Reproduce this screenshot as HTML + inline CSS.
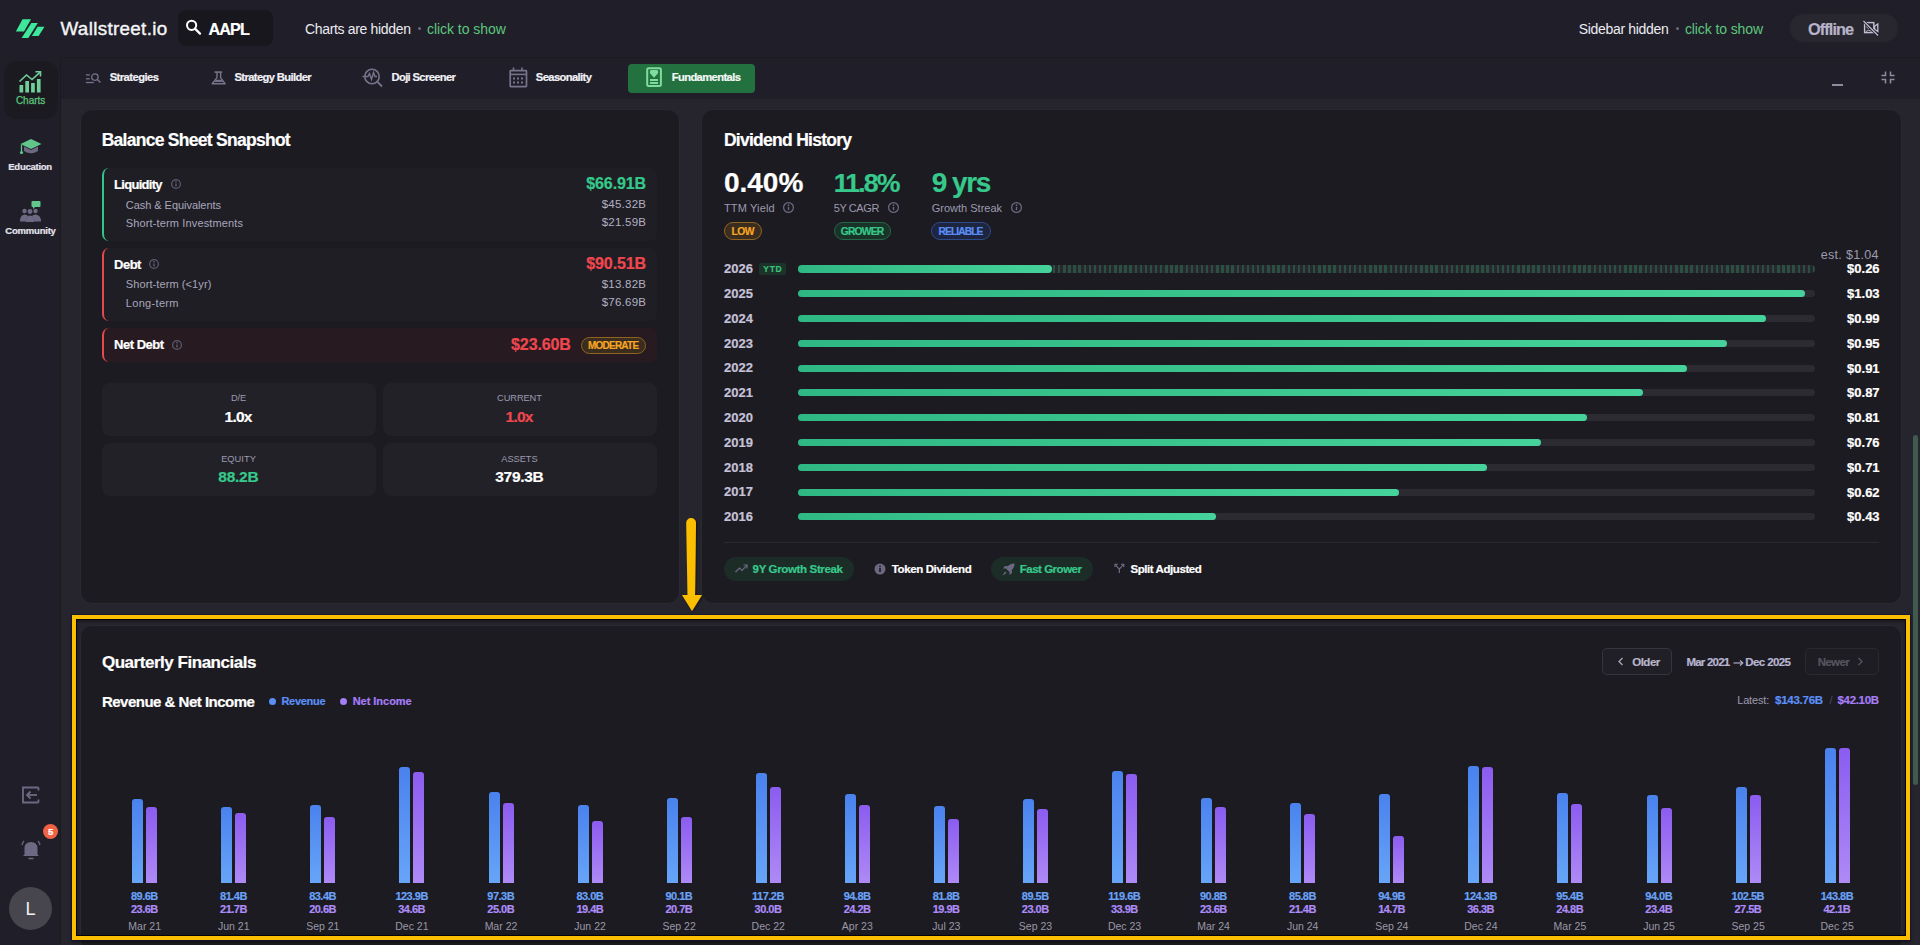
<!DOCTYPE html>
<html><head><meta charset="utf-8"><title>Wallstreet.io</title>
<style>
html,body{margin:0;padding:0;}
body{width:1920px;height:945px;overflow:hidden;position:relative;background:#26252e;font-family:"Liberation Sans",sans-serif;}
.a{position:absolute;box-sizing:border-box;}
.t{position:absolute;white-space:nowrap;}
.t[style*="font-weight:700"]{-webkit-text-stroke:0.2px currentColor;}
svg{position:absolute;overflow:visible;}

</style></head><body>
<div class="a" style="left:0px;top:0px;width:1920px;height:57px;background:#201f29;"></div><div class="a" style="left:0px;top:0px;width:60px;height:945px;background:#201f29;"></div><div class="a" style="left:60px;top:57px;width:1860px;height:1px;background:#1b1a21;"></div><div class="a" style="left:60px;top:57px;width:1px;height:888px;background:#1b1a21;"></div><div class="a" style="left:61px;top:58px;width:1859px;height:41px;background:#201f29;"></div><svg style="left:0;top:0" width="60" height="57" viewBox="0 0 60 57"><polygon points="22.5,19.2 31,19.2 24,31.4 15.9,31.4" fill="#3ee89a"/><polygon points="31.4,23 37.8,23 28.3,38 21.6,38" fill="#3ee89a"/><polygon points="37.6,26.7 44.5,26.7 38.6,36 31.9,36" fill="#3ee89a"/></svg><div class="t" style="left:60.50px;top:19.69px;font-size:18.8px;line-height:18.8px;color:#f4f4f6;letter-spacing:0.338px;-webkit-text-stroke:0.4px #f4f4f6;">Wallstreet.io</div><div class="a" style="left:178px;top:10px;width:95px;height:36px;background:#18171d;border-radius:8px;"></div><svg style="left:185px;top:19px" width="18" height="16" viewBox="0 0 18 16"><circle cx="6.6" cy="6.3" r="4.6" fill="none" stroke="#fff" stroke-width="2"/><line x1="10" y1="9.6" x2="15" y2="14.6" stroke="#fff" stroke-width="2.2" stroke-linecap="round"/></svg><div class="t" style="left:208.50px;top:20.90px;font-size:16.3px;line-height:16.3px;color:#ffffff;font-weight:700;letter-spacing:-1.000px;">AAPL</div><div class="t" style="left:305.00px;top:21.55px;font-size:14px;line-height:14px;color:#ecebf2;letter-spacing:-0.331px;">Charts are hidden</div><div class="a" style="left:417.5px;top:26.5px;width:3.0px;height:3.0px;background:#6b6979;border-radius:50%;"></div><div class="t" style="left:427.00px;top:21.55px;font-size:14px;line-height:14px;color:#5cc77e;letter-spacing:-0.051px;">click to show</div><div class="t" style="left:1578.80px;top:21.65px;font-size:14px;line-height:14px;color:#ecebf2;letter-spacing:-0.322px;">Sidebar hidden</div><div class="a" style="left:1675.5px;top:27px;width:3.0px;height:3px;background:#6b6979;border-radius:50%;"></div><div class="t" style="left:1684.90px;top:21.65px;font-size:14px;line-height:14px;color:#5cc77e;letter-spacing:-0.101px;">click to show</div><div class="a" style="left:1790px;top:14px;width:108px;height:28px;background:#282730;border-radius:14px;"></div><div class="t" style="left:1808.00px;top:20.80px;font-size:16.3px;line-height:16.3px;color:#b7b3c8;font-weight:700;letter-spacing:-0.900px;">Offline</div><svg style="left:1862px;top:20px" width="18" height="17" viewBox="0 0 18 17"><rect x="2.6" y="2.6" width="9.2" height="10" fill="none" stroke="#c2bed4" stroke-width="1.4"/><polygon points="12.6,6.3 15.8,4 15.8,11.5 12.6,9.2" fill="none" stroke="#c2bed4" stroke-width="1.3"/><circle cx="6.2" cy="6.8" r="1.3" fill="none" stroke="#c2bed4" stroke-width="1"/><path d="M4,11.5 Q6.5,8.8 9.5,11.5" fill="none" stroke="#c2bed4" stroke-width="1"/><line x1="1.5" y1="1" x2="16" y2="15.5" stroke="#1f1e27" stroke-width="2.6"/><line x1="1.5" y1="1" x2="16" y2="15.5" stroke="#c2bed4" stroke-width="1.3"/></svg><div class="a" style="left:4px;top:61px;width:54px;height:58px;background:#1b1a20;border-radius:13px;"></div><svg style="left:19px;top:71px" width="24" height="22" viewBox="0 0 24 22"><rect x="0.5" y="14" width="3.7" height="7.5" fill="#6fcf97"/><rect x="6.3" y="10" width="3.7" height="11.5" fill="#6fcf97"/><rect x="12.1" y="12" width="3.7" height="9.5" fill="#6fcf97"/><rect x="17.9" y="8" width="3.7" height="13.5" fill="#6fcf97"/><polyline points="0.5,10.5 7.5,4 13,8.5 21.5,0.8" fill="none" stroke="#6fcf97" stroke-width="1.6"/><polyline points="16.5,0.8 21.5,0.8 21.5,5.5" fill="none" stroke="#6fcf97" stroke-width="1.6"/></svg><div class="t" style="left:15.90px;top:96.33px;font-size:10px;line-height:10px;color:#5cc77e;letter-spacing:-0.010px;-webkit-text-stroke:0.25px #5cc77e;">Charts</div><svg style="left:19px;top:138px" width="24" height="18" viewBox="0 0 24 18"><path d="M5,8.5 L5,13 Q12,17.5 19,13 L19,8.5 L12,12 Z" fill="#6d6983"/><polygon points="12,1 22.5,6 12,11 1.5,6" fill="#62c68c"/><line x1="2.5" y1="6.5" x2="2.5" y2="13.5" stroke="#62c68c" stroke-width="1.3"/><circle cx="2.5" cy="14.5" r="1.6" fill="#62c68c"/></svg><div class="t" style="left:8.30px;top:161.66px;font-size:9.5px;line-height:9.5px;color:#e6e4ee;font-weight:700;letter-spacing:-0.264px;">Education</div><svg style="left:19px;top:200px" width="24" height="24" viewBox="0 0 24 24"><rect x="12.5" y="1" width="9" height="6" rx="1" fill="#62c68c"/><polygon points="14,6.5 16.5,6.5 14,9" fill="#62c68c"/><circle cx="5.5" cy="11" r="2.2" fill="#6d6983"/><circle cx="11" cy="11.5" r="2.4" fill="#6d6983"/><circle cx="16.5" cy="11" r="2.2" fill="#6d6983"/><path d="M1,21.5 Q1,15 5.5,14.5 Q8,14.5 9,16 Q6.5,18 6.5,21.5 Z" fill="#6d6983"/><path d="M22,21.5 Q22,15 16.5,14.5 Q14,14.5 13,16 Q15.5,18 15.5,21.5 Z" fill="#6d6983"/><path d="M6.5,22 Q6.5,15.5 11,15.5 Q15.5,15.5 15.5,22 Z" fill="#6d6983"/></svg><div class="t" style="left:5.30px;top:226.46px;font-size:9.5px;line-height:9.5px;color:#e6e4ee;font-weight:700;letter-spacing:-0.206px;">Community</div><svg style="left:21px;top:786px" width="19" height="18" viewBox="0 0 19 18"><path d="M17.5,1.5 L2,1.5 L2,16.5 L17.5,16.5" fill="none" stroke="#6d6983" stroke-width="1.8"/><line x1="17.5" y1="1.5" x2="17.5" y2="4.5" stroke="#6d6983" stroke-width="1.8"/><line x1="17.5" y1="13.5" x2="17.5" y2="16.5" stroke="#6d6983" stroke-width="1.8"/><line x1="6" y1="9" x2="16" y2="9" stroke="#6d6983" stroke-width="1.8"/><polyline points="9.5,5.5 6,9 9.5,12.5" fill="none" stroke="#6d6983" stroke-width="1.8"/></svg><svg style="left:20px;top:839px" width="22" height="22" viewBox="0 0 22 22"><path d="M4.5,15.5 L4.5,9.5 Q4.5,3 11,3 Q17.5,3 17.5,9.5 L17.5,15.5 L19,17 L3,17 Z" fill="#6d6983"/><line x1="8.5" y1="19.5" x2="13.5" y2="19.5" stroke="#6d6983" stroke-width="1.5"/><path d="M2,6 Q2.5,3.5 4,2" fill="none" stroke="#6d6983" stroke-width="1.3"/><path d="M20,6 Q19.5,3.5 18,2" fill="none" stroke="#6d6983" stroke-width="1.3"/></svg><div class="a" style="left:43px;top:824px;width:15px;height:15px;background:#ef6344;border-radius:50%;"></div><div class="t" style="left:47.96px;top:826.96px;font-size:9.5px;line-height:9.5px;color:#ffffff;font-weight:700;">5</div><div class="a" style="left:9px;top:887px;width:43px;height:43px;background:#47464e;border-radius:50%;"></div><div class="t" style="left:25.50px;top:899.76px;font-size:18px;line-height:18px;color:#f2f2f5;">L</div><svg style="left:85px;top:72px" width="17" height="13" viewBox="0 0 17 13"><line x1="0.9" y1="2.9" x2="4.8" y2="2.9" stroke="#77738c" stroke-width="1.3"/><line x1="0.9" y1="6.8" x2="4.8" y2="6.8" stroke="#77738c" stroke-width="1.3"/><line x1="0.9" y1="10.5" x2="8.8" y2="10.5" stroke="#77738c" stroke-width="1.3"/><circle cx="9.9" cy="5.1" r="3.2" fill="none" stroke="#77738c" stroke-width="1.3"/><line x1="12.3" y1="7.5" x2="15.5" y2="10.5" stroke="#77738c" stroke-width="1.4"/></svg><div class="t" style="left:109.70px;top:71.82px;font-size:11.2px;line-height:11.2px;color:#f2f1f6;font-weight:700;letter-spacing:-0.539px;">Strategies</div><svg style="left:211px;top:70px" width="16" height="16" viewBox="0 0 16 16"><path d="M6,2.5 L6,7.6 L1.2,13.8 L14.2,13.8 L9.6,7.6 L9.6,2.5" fill="none" stroke="#77738c" stroke-width="1.4" stroke-linejoin="round"/><line x1="3.5" y1="2.1" x2="11.1" y2="2.1" stroke="#77738c" stroke-width="1.6"/><polygon points="5,9.8 10.4,9.8 12,12.1 3.4,12.1" fill="#77738c"/></svg><div class="t" style="left:234.50px;top:71.82px;font-size:11.2px;line-height:11.2px;color:#f2f1f6;font-weight:700;letter-spacing:-0.615px;">Strategy Builder</div><svg style="left:362px;top:68px" width="22" height="20" viewBox="0 0 22 20"><circle cx="10" cy="8.5" r="7.2" fill="none" stroke="#77738c" stroke-width="1.6"/><line x1="15.2" y1="13.7" x2="20" y2="18.5" stroke="#77738c" stroke-width="1.8"/><polyline points="0.5,8.5 6,8.5 7.5,5.5 9.5,11.5 11.5,4.5 13,8.5 15,8.5" fill="none" stroke="#77738c" stroke-width="1.4"/></svg><div class="t" style="left:391.50px;top:71.82px;font-size:11.2px;line-height:11.2px;color:#f2f1f6;font-weight:700;letter-spacing:-0.643px;">Doji Screener</div><svg style="left:508px;top:67px" width="20" height="21" viewBox="0 0 20 21"><rect x="2.2" y="3.6" width="16.3" height="16" rx="0.6" fill="none" stroke="#77738c" stroke-width="1.7"/><line x1="2.2" y1="7.4" x2="18.5" y2="7.4" stroke="#77738c" stroke-width="1.6"/><line x1="5.5" y1="0.5" x2="5.5" y2="4" stroke="#77738c" stroke-width="1.6"/><line x1="14" y1="0.5" x2="14" y2="4" stroke="#77738c" stroke-width="1.6"/><rect x="5" y="10.5" width="2" height="2" fill="#77738c"/><rect x="9" y="10.5" width="2" height="2" fill="#77738c"/><rect x="13" y="10.5" width="2" height="2" fill="#77738c"/><rect x="5" y="14.5" width="2" height="2" fill="#77738c"/><rect x="9" y="14.5" width="2" height="2" fill="#77738c"/><rect x="13" y="14.5" width="2" height="2" fill="#77738c"/></svg><div class="t" style="left:535.80px;top:71.82px;font-size:11.2px;line-height:11.2px;color:#f2f1f6;font-weight:700;letter-spacing:-0.604px;">Seasonality</div><div class="a" style="left:628px;top:64px;width:127px;height:29px;background:#23713f;border-radius:4px;"></div><svg style="left:645px;top:66px" width="19" height="23" viewBox="0 0 19 23"><rect x="2.2" y="2.2" width="13.7" height="17.9" rx="1.3" fill="none" stroke="#7fdc9e" stroke-width="2"/><path d="M9,11.8 L5.2,7.6 Q4.6,6.6 4.9,5.6 L5.6,4 L12.4,4 L13.1,5.6 Q13.4,6.6 12.8,7.6 Z" fill="#7fdc9e"/><rect x="5" y="13" width="8" height="2" fill="#7fdc9e"/><rect x="5" y="16" width="8" height="2" fill="#7fdc9e"/></svg><div class="t" style="left:671.70px;top:71.72px;font-size:11.2px;line-height:11.2px;color:#f4f8f5;font-weight:700;letter-spacing:-0.603px;">Fundamentals</div><div class="a" style="left:1832px;top:84px;width:11px;height:2px;background:#8e8aa0;"></div><svg style="left:1881px;top:71px" width="14" height="14" viewBox="0 0 14 14"><polyline points="0.5,4.5 4.5,4.5 4.5,0.5" fill="none" stroke="#8e8aa0" stroke-width="1.5"/><polyline points="13.5,4.5 9.5,4.5 9.5,0.5" fill="none" stroke="#8e8aa0" stroke-width="1.5"/><polyline points="0.5,8.5 4.5,8.5 4.5,12.5" fill="none" stroke="#8e8aa0" stroke-width="1.5"/><polyline points="13.5,8.5 9.5,8.5 9.5,12.5" fill="none" stroke="#8e8aa0" stroke-width="1.5"/></svg><div class="a" style="left:1913px;top:435px;width:5px;height:350px;background:#3f5a4f;border-radius:3px;"></div><div class="a" style="left:80px;top:109px;width:600px;height:495px;background:#1c1b21;border:1px solid #2a2930;border-radius:12px;"></div><div class="t" style="left:101.70px;top:131.89px;font-size:17.5px;line-height:17.5px;color:#ffffff;font-weight:700;letter-spacing:-0.725px;">Balance Sheet Snapshot</div><div class="a" style="left:102px;top:168px;width:555px;height:73px;background:#1f1e25;border-radius:7px;border-left:2.5px solid #34c48a;"></div><div class="t" style="left:114.10px;top:177.60px;font-size:13px;line-height:13px;color:#ffffff;font-weight:700;letter-spacing:-0.706px;">Liquidity</div><svg style="left:169.7px;top:178.1px" width="12" height="12" viewBox="0 0 12 12"><circle cx="6" cy="6" r="4.4" fill="none" stroke="#5d5a6e" stroke-width="1.25"/><line x1="6" y1="5.4" x2="6" y2="8.6" stroke="#5d5a6e" stroke-width="1.4"/><circle cx="6" cy="3.7" r="0.85" fill="#5d5a6e"/></svg><div class="t" style="left:125.80px;top:199.59px;font-size:11px;line-height:11px;color:#a9a6bb;letter-spacing:-0.047px;">Cash &amp; Equivalents</div><div class="t" style="left:125.80px;top:217.69px;font-size:11px;line-height:11px;color:#a9a6bb;letter-spacing:0.137px;">Short-term Investments</div><div class="t" style="left:586.30px;top:176.06px;font-size:16px;line-height:16px;color:#36c98b;font-weight:700;letter-spacing:-0.113px;">$66.91B</div><div class="t" style="left:601.70px;top:199.17px;font-size:11.5px;line-height:11.5px;color:#b3b0c2;letter-spacing:0.244px;">$45.32B</div><div class="t" style="left:601.70px;top:217.17px;font-size:11.5px;line-height:11.5px;color:#b3b0c2;letter-spacing:0.244px;">$21.59B</div><div class="a" style="left:102px;top:248px;width:555px;height:73px;background:#1f1e25;border-radius:7px;border-left:2.5px solid #e5484d;"></div><div class="t" style="left:114.10px;top:257.60px;font-size:13px;line-height:13px;color:#ffffff;font-weight:700;letter-spacing:-0.531px;">Debt</div><svg style="left:148.3px;top:258.1px" width="12" height="12" viewBox="0 0 12 12"><circle cx="6" cy="6" r="4.4" fill="none" stroke="#5d5a6e" stroke-width="1.25"/><line x1="6" y1="5.4" x2="6" y2="8.6" stroke="#5d5a6e" stroke-width="1.4"/><circle cx="6" cy="3.7" r="0.85" fill="#5d5a6e"/></svg><div class="t" style="left:125.80px;top:279.49px;font-size:11px;line-height:11px;color:#a9a6bb;letter-spacing:0.091px;">Short-term (&lt;1yr)</div><div class="t" style="left:125.80px;top:297.79px;font-size:11px;line-height:11px;color:#a9a6bb;letter-spacing:0.321px;">Long-term</div><div class="t" style="left:586.30px;top:256.06px;font-size:16px;line-height:16px;color:#f0474f;font-weight:700;letter-spacing:-0.113px;">$90.51B</div><div class="t" style="left:601.70px;top:279.17px;font-size:11.5px;line-height:11.5px;color:#b3b0c2;letter-spacing:0.244px;">$13.82B</div><div class="t" style="left:601.70px;top:297.17px;font-size:11.5px;line-height:11.5px;color:#b3b0c2;letter-spacing:0.244px;">$76.69B</div><div class="a" style="left:102px;top:328px;width:555px;height:34px;background:#271b21;border-radius:7px;border-left:2.5px solid #e5484d;"></div><div class="t" style="left:114.10px;top:338.40px;font-size:13px;line-height:13px;color:#ffffff;font-weight:700;letter-spacing:-0.495px;">Net Debt</div><svg style="left:171.3px;top:339px" width="12" height="12" viewBox="0 0 12 12"><circle cx="6" cy="6" r="4.4" fill="none" stroke="#5d5a6e" stroke-width="1.25"/><line x1="6" y1="5.4" x2="6" y2="8.6" stroke="#5d5a6e" stroke-width="1.4"/><circle cx="6" cy="3.7" r="0.85" fill="#5d5a6e"/></svg><div class="t" style="left:511.10px;top:336.96px;font-size:16px;line-height:16px;color:#f0474f;font-weight:700;letter-spacing:-0.130px;">$23.60B</div><div class="a" style="left:581px;top:337px;width:65px;height:17px;background:#3a2c1e;border:1px solid #8f6420;border-radius:9px;"></div><div class="t" style="left:587.89px;top:340.73px;font-size:10px;line-height:10px;color:#f5a623;font-weight:700;letter-spacing:-0.750px;">MODERATE</div><div class="a" style="left:102px;top:383px;width:274px;height:53px;background:#222128;border-radius:8px;"></div><div class="a" style="left:102px;top:443px;width:274px;height:53px;background:#222128;border-radius:8px;"></div><div class="a" style="left:383px;top:383px;width:274px;height:53px;background:#222128;border-radius:8px;"></div><div class="a" style="left:383px;top:443px;width:274px;height:53px;background:#222128;border-radius:8px;"></div><div class="t" style="left:230.90px;top:394.43px;font-size:9.3px;line-height:9.3px;color:#9d9aae;letter-spacing:-0.154px;">D/E</div><div class="t" style="left:224.50px;top:409.08px;font-size:15.5px;line-height:15.5px;color:#ffffff;font-weight:700;letter-spacing:-0.729px;">1.0x</div><div class="t" style="left:497.10px;top:394.43px;font-size:9.3px;line-height:9.3px;color:#9d9aae;letter-spacing:-0.113px;">CURRENT</div><div class="t" style="left:505.50px;top:409.08px;font-size:15.5px;line-height:15.5px;color:#f0474f;font-weight:700;letter-spacing:-0.729px;">1.0x</div><div class="t" style="left:221.15px;top:455.43px;font-size:9.3px;line-height:9.3px;color:#9d9aae;letter-spacing:0.016px;">EQUITY</div><div class="t" style="left:218.35px;top:468.88px;font-size:15.5px;line-height:15.5px;color:#36c98b;font-weight:700;letter-spacing:-0.262px;">88.2B</div><div class="t" style="left:501.30px;top:455.43px;font-size:9.3px;line-height:9.3px;color:#9d9aae;letter-spacing:-0.058px;">ASSETS</div><div class="t" style="left:495.25px;top:468.88px;font-size:15.5px;line-height:15.5px;color:#ffffff;font-weight:700;letter-spacing:-0.297px;">379.3B</div><div class="a" style="left:701px;top:109px;width:1201px;height:495px;background:#1c1b21;border:1px solid #2a2930;border-radius:12px;"></div><div class="t" style="left:723.90px;top:131.79px;font-size:17.5px;line-height:17.5px;color:#ffffff;font-weight:700;letter-spacing:-0.723px;">Dividend History</div><div class="t" style="left:723.90px;top:169.30px;font-size:28px;line-height:28px;color:#ffffff;font-weight:700;letter-spacing:0.005px;">0.40%</div><div class="t" style="left:833.70px;top:170.42px;font-size:26.68px;line-height:26.68px;color:#36c98b;font-weight:700;letter-spacing:-1.868px;">11.8%</div><div class="t" style="left:931.70px;top:169.20px;font-size:28px;line-height:28px;color:#36c98b;font-weight:700;letter-spacing:-1.470px;">9 yrs</div><div class="t" style="left:723.90px;top:202.69px;font-size:11px;line-height:11px;color:#9d9aae;letter-spacing:0.162px;">TTM Yield</div><svg style="left:781.9px;top:201.0px" width="13.0" height="13.0" viewBox="0 0 13.0 13.0"><circle cx="6.5" cy="6.5" r="4.9" fill="none" stroke="#6c6980" stroke-width="1.25"/><line x1="6.5" y1="5.9" x2="6.5" y2="9.1" stroke="#6c6980" stroke-width="1.4"/><circle cx="6.5" cy="4.2" r="0.85" fill="#6c6980"/></svg><div class="t" style="left:833.70px;top:202.69px;font-size:11px;line-height:11px;color:#9d9aae;letter-spacing:-0.400px;">5Y CAGR</div><svg style="left:886.9px;top:201.0px" width="13.0" height="13.0" viewBox="0 0 13.0 13.0"><circle cx="6.5" cy="6.5" r="4.9" fill="none" stroke="#6c6980" stroke-width="1.25"/><line x1="6.5" y1="5.9" x2="6.5" y2="9.1" stroke="#6c6980" stroke-width="1.4"/><circle cx="6.5" cy="4.2" r="0.85" fill="#6c6980"/></svg><div class="t" style="left:931.70px;top:202.59px;font-size:11px;line-height:11px;color:#9d9aae;letter-spacing:0.005px;">Growth Streak</div><svg style="left:1009.5px;top:200.8px" width="13.0" height="13.0" viewBox="0 0 13.0 13.0"><circle cx="6.5" cy="6.5" r="4.9" fill="none" stroke="#6c6980" stroke-width="1.25"/><line x1="6.5" y1="5.9" x2="6.5" y2="9.1" stroke="#6c6980" stroke-width="1.4"/><circle cx="6.5" cy="4.2" r="0.85" fill="#6c6980"/></svg><div class="a" style="left:724px;top:222px;width:38px;height:18px;background:#3a2c1e;border:1px solid #8f6420;border-radius:9px;"></div><div class="t" style="left:731.59px;top:227.08px;font-size:10.3px;line-height:10.3px;color:#f5a623;font-weight:700;letter-spacing:-0.600px;">LOW</div><div class="a" style="left:834px;top:222px;width:57px;height:18px;background:#1a3328;border:1px solid #23664a;border-radius:9px;"></div><div class="t" style="left:840.76px;top:227.08px;font-size:10.3px;line-height:10.3px;color:#36c98b;font-weight:700;letter-spacing:-0.800px;">GROWER</div><div class="a" style="left:931px;top:222px;width:60px;height:18px;background:#1d2540;border:1px solid #2f4a8a;border-radius:9px;"></div><div class="t" style="left:938.58px;top:227.08px;font-size:10.3px;line-height:10.3px;color:#5b8ef5;font-weight:700;letter-spacing:-0.950px;">RELIABLE</div><div class="t" style="left:1820.70px;top:249.02px;font-size:12.5px;line-height:12.5px;color:#9d9aae;letter-spacing:0.322px;">est. $1.04</div><div class="t" style="left:724.00px;top:262.20px;font-size:13px;line-height:13px;color:#c6c2d8;font-weight:700;">2026</div><div class="a" style="left:798px;top:264.9px;width:1017px;height:8.0px;border-radius:4px;background:repeating-linear-gradient(90deg,#2b4f40 0 2.4px,#27272d 2.4px 5.1px);"></div><div class="a" style="left:798px;top:264.9px;width:254px;height:8.0px;background:linear-gradient(90deg,#2fb883,#46d39b);border-radius:4px;"></div><div class="t" style="left:1847.07px;top:262.30px;font-size:13px;line-height:13px;color:#ffffff;font-weight:700;">$0.26</div><div class="t" style="left:724.00px;top:287.00px;font-size:13px;line-height:13px;color:#c6c2d8;font-weight:700;">2025</div><div class="a" style="left:798px;top:290.1px;width:1017px;height:7.199999999999989px;background:#2c2b31;border-radius:4px;"></div><div class="a" style="left:798px;top:290.1px;width:1006.5999999999999px;height:7.199999999999989px;background:linear-gradient(90deg,#2fb883,#46d39b);border-radius:4px;"></div><div class="t" style="left:1847.07px;top:287.10px;font-size:13px;line-height:13px;color:#ffffff;font-weight:700;">$1.03</div><div class="t" style="left:724.00px;top:311.80px;font-size:13px;line-height:13px;color:#c6c2d8;font-weight:700;">2024</div><div class="a" style="left:798px;top:314.9px;width:1017px;height:7.2000000000000455px;background:#2c2b31;border-radius:4px;"></div><div class="a" style="left:798px;top:314.9px;width:967.7px;height:7.2000000000000455px;background:linear-gradient(90deg,#2fb883,#46d39b);border-radius:4px;"></div><div class="t" style="left:1847.07px;top:311.90px;font-size:13px;line-height:13px;color:#ffffff;font-weight:700;">$0.99</div><div class="t" style="left:724.00px;top:336.60px;font-size:13px;line-height:13px;color:#c6c2d8;font-weight:700;">2023</div><div class="a" style="left:798px;top:339.7px;width:1017px;height:7.199999999999989px;background:#2c2b31;border-radius:4px;"></div><div class="a" style="left:798px;top:339.7px;width:928.5999999999999px;height:7.199999999999989px;background:linear-gradient(90deg,#2fb883,#46d39b);border-radius:4px;"></div><div class="t" style="left:1847.07px;top:336.70px;font-size:13px;line-height:13px;color:#ffffff;font-weight:700;">$0.95</div><div class="t" style="left:724.00px;top:361.40px;font-size:13px;line-height:13px;color:#c6c2d8;font-weight:700;">2022</div><div class="a" style="left:798px;top:364.5px;width:1017px;height:7.199999999999989px;background:#2c2b31;border-radius:4px;"></div><div class="a" style="left:798px;top:364.5px;width:888.9000000000001px;height:7.199999999999989px;background:linear-gradient(90deg,#2fb883,#46d39b);border-radius:4px;"></div><div class="t" style="left:1847.07px;top:361.50px;font-size:13px;line-height:13px;color:#ffffff;font-weight:700;">$0.91</div><div class="t" style="left:724.00px;top:386.20px;font-size:13px;line-height:13px;color:#c6c2d8;font-weight:700;">2021</div><div class="a" style="left:798px;top:389.3px;width:1017px;height:7.199999999999989px;background:#2c2b31;border-radius:4px;"></div><div class="a" style="left:798px;top:389.3px;width:845.2px;height:7.199999999999989px;background:linear-gradient(90deg,#2fb883,#46d39b);border-radius:4px;"></div><div class="t" style="left:1847.07px;top:386.30px;font-size:13px;line-height:13px;color:#ffffff;font-weight:700;">$0.87</div><div class="t" style="left:724.00px;top:411.00px;font-size:13px;line-height:13px;color:#c6c2d8;font-weight:700;">2020</div><div class="a" style="left:798px;top:414.1px;width:1017px;height:7.199999999999989px;background:#2c2b31;border-radius:4px;"></div><div class="a" style="left:798px;top:414.1px;width:788.9000000000001px;height:7.199999999999989px;background:linear-gradient(90deg,#2fb883,#46d39b);border-radius:4px;"></div><div class="t" style="left:1847.07px;top:411.10px;font-size:13px;line-height:13px;color:#ffffff;font-weight:700;">$0.81</div><div class="t" style="left:724.00px;top:435.80px;font-size:13px;line-height:13px;color:#c6c2d8;font-weight:700;">2019</div><div class="a" style="left:798px;top:438.9px;width:1017px;height:7.2000000000000455px;background:#2c2b31;border-radius:4px;"></div><div class="a" style="left:798px;top:438.9px;width:742.8px;height:7.2000000000000455px;background:linear-gradient(90deg,#2fb883,#46d39b);border-radius:4px;"></div><div class="t" style="left:1847.07px;top:435.90px;font-size:13px;line-height:13px;color:#ffffff;font-weight:700;">$0.76</div><div class="t" style="left:724.00px;top:460.60px;font-size:13px;line-height:13px;color:#c6c2d8;font-weight:700;">2018</div><div class="a" style="left:798px;top:463.7px;width:1017px;height:7.199999999999989px;background:#2c2b31;border-radius:4px;"></div><div class="a" style="left:798px;top:463.7px;width:688.9000000000001px;height:7.199999999999989px;background:linear-gradient(90deg,#2fb883,#46d39b);border-radius:4px;"></div><div class="t" style="left:1847.07px;top:460.70px;font-size:13px;line-height:13px;color:#ffffff;font-weight:700;">$0.71</div><div class="t" style="left:724.00px;top:485.40px;font-size:13px;line-height:13px;color:#c6c2d8;font-weight:700;">2017</div><div class="a" style="left:798px;top:488.5px;width:1017px;height:7.199999999999989px;background:#2c2b31;border-radius:4px;"></div><div class="a" style="left:798px;top:488.5px;width:601px;height:7.199999999999989px;background:linear-gradient(90deg,#2fb883,#46d39b);border-radius:4px;"></div><div class="t" style="left:1847.07px;top:485.50px;font-size:13px;line-height:13px;color:#ffffff;font-weight:700;">$0.62</div><div class="t" style="left:724.00px;top:510.20px;font-size:13px;line-height:13px;color:#c6c2d8;font-weight:700;">2016</div><div class="a" style="left:798px;top:513.3px;width:1017px;height:7.2000000000000455px;background:#2c2b31;border-radius:4px;"></div><div class="a" style="left:798px;top:513.3px;width:418px;height:7.2000000000000455px;background:linear-gradient(90deg,#2fb883,#46d39b);border-radius:4px;"></div><div class="t" style="left:1847.07px;top:510.30px;font-size:13px;line-height:13px;color:#ffffff;font-weight:700;">$0.43</div><div class="a" style="left:759px;top:263px;width:27px;height:12px;background:#1b3328;border-radius:2px;"></div><div class="t" style="left:763.35px;top:265.00px;font-size:8.5px;line-height:8.5px;color:#3cbf7c;font-weight:700;letter-spacing:0.650px;">YTD</div><div class="a" style="left:724px;top:542px;width:1155px;height:1px;background:#2a2930;"></div><div class="a" style="left:724px;top:557px;width:130px;height:24px;background:#1c2d28;border-radius:12px;"></div><svg style="left:735px;top:564px" width="13" height="9" viewBox="0 0 13 9"><polyline points="0.5,8 4.5,4 7,6.5 12,1.2" fill="none" stroke="#6d6983" stroke-width="1.2"/><polyline points="8.5,1 12,1 12,4.5" fill="none" stroke="#6d6983" stroke-width="1.2"/></svg><div class="t" style="left:752.60px;top:563.57px;font-size:11.5px;line-height:11.5px;color:#36c98b;font-weight:700;letter-spacing:-0.352px;">9Y Growth Streak</div><svg style="left:874px;top:563px" width="12" height="12" viewBox="0 0 12 12"><circle cx="6" cy="6" r="5.5" fill="#6b6880"/><rect x="5.2" y="5" width="1.6" height="4" fill="#1c1b21"/><circle cx="6" cy="3.3" r="0.9" fill="#1c1b21"/></svg><div class="t" style="left:891.70px;top:563.57px;font-size:11.5px;line-height:11.5px;color:#ffffff;font-weight:700;letter-spacing:-0.368px;">Token Dividend</div><div class="a" style="left:991px;top:557px;width:102px;height:24px;background:#1c2d28;border-radius:12px;"></div><svg style="left:1002px;top:563px" width="13" height="13" viewBox="0 0 13 13"><path d="M12.5,0.5 Q7,0.5 4,5.5 L7.5,9 Q12.5,6 12.5,0.5 Z" fill="#6d6983"/><path d="M4,5.5 L1,5.5 L3,3 L6,3 Z" fill="#6d6983"/><path d="M7.5,9 L7.5,12 L10,10 L10,7 Z" fill="#6d6983"/><path d="M3,8.5 L0.5,12.5 L4.5,10 Z" fill="#6d6983"/></svg><div class="t" style="left:1019.70px;top:563.57px;font-size:11.5px;line-height:11.5px;color:#36c98b;font-weight:700;letter-spacing:-0.480px;">Fast Grower</div><svg style="left:1114px;top:563px" width="11" height="11" viewBox="0 0 11 11"><path d="M5.3,10 L5.3,6.2 L1.6,2 M5.3,6.2 L9.2,2" fill="none" stroke="#77738c" stroke-width="1.1"/><polyline points="1,4 1,1.2 3.8,1.2" fill="none" stroke="#77738c" stroke-width="1.1"/><polyline points="7,1.2 9.8,1.2 9.8,4" fill="none" stroke="#77738c" stroke-width="1.1"/></svg><div class="t" style="left:1130.40px;top:563.57px;font-size:11.5px;line-height:11.5px;color:#ffffff;font-weight:700;letter-spacing:-0.421px;">Split Adjusted</div><div class="a" style="left:80px;top:625px;width:1822px;height:365px;background:#1c1b21;border:1px solid #2a2930;border-radius:12px;"></div><div class="t" style="left:101.90px;top:653.81px;font-size:17px;line-height:17px;color:#ffffff;font-weight:700;letter-spacing:-0.466px;">Quarterly Financials</div><div class="t" style="left:101.90px;top:694.20px;font-size:15px;line-height:15px;color:#ffffff;font-weight:700;letter-spacing:-0.503px;">Revenue &amp; Net Income</div><div class="a" style="left:269px;top:698px;width:7px;height:7px;background:#5b8ff5;border-radius:50%;"></div><div class="t" style="left:281.40px;top:695.79px;font-size:11px;line-height:11px;color:#5b8ff5;font-weight:700;letter-spacing:-0.274px;">Revenue</div><div class="a" style="left:340px;top:698px;width:7px;height:7px;background:#a57df5;border-radius:50%;"></div><div class="t" style="left:352.70px;top:695.79px;font-size:11px;line-height:11px;color:#a57df5;font-weight:700;letter-spacing:-0.032px;">Net Income</div><div class="a" style="left:1602px;top:648px;width:70px;height:27px;background:#201f26;border:1px solid #36353d;border-radius:5px;"></div><svg style="left:1617px;top:657px" width="7" height="9" viewBox="0 0 7 9"><polyline points="5.5,1 2,4.5 5.5,8" fill="none" stroke="#a9a6bb" stroke-width="1.3"/></svg><div class="t" style="left:1632.20px;top:656.52px;font-size:11.5px;line-height:11.5px;color:#b8b5c9;font-weight:700;letter-spacing:-0.486px;">Older</div><div class="t" style="left:1686.40px;top:656.52px;font-size:11.5px;line-height:11.5px;color:#b8b5d0;font-weight:700;letter-spacing:-0.774px;">Mar 2021</div><svg style="left:1733px;top:659px" width="11" height="8" viewBox="0 0 11 8"><line x1="0.5" y1="4" x2="9.5" y2="4" stroke="#b8b5d0" stroke-width="1.1"/><polyline points="7,1.5 9.8,4 7,6.5" fill="none" stroke="#b8b5d0" stroke-width="1.1"/></svg><div class="t" style="left:1745.30px;top:656.52px;font-size:11.5px;line-height:11.5px;color:#b8b5d0;font-weight:700;letter-spacing:-0.597px;">Dec 2025</div><div class="a" style="left:1805px;top:648px;width:74px;height:27px;background:#1e1d23;border:1px solid #2a2930;border-radius:5px;"></div><div class="t" style="left:1817.70px;top:656.52px;font-size:11.5px;line-height:11.5px;color:#56545f;font-weight:700;letter-spacing:-0.632px;">Newer</div><svg style="left:1857px;top:657px" width="7" height="9" viewBox="0 0 7 9"><polyline points="1.5,1 5,4.5 1.5,8" fill="none" stroke="#56545f" stroke-width="1.3"/></svg><div class="t" style="left:1737.20px;top:695.49px;font-size:11px;line-height:11px;color:#9d9aae;letter-spacing:-0.171px;">Latest:</div><div class="t" style="left:1775.00px;top:695.07px;font-size:11.5px;line-height:11.5px;color:#5b8ff5;font-weight:700;letter-spacing:-0.254px;">$143.76B</div><div class="t" style="left:1829.46px;top:695.49px;font-size:11px;line-height:11px;color:#4b4957;">/</div><div class="t" style="left:1837.50px;top:695.07px;font-size:11.5px;line-height:11.5px;color:#a57df5;font-weight:700;letter-spacing:-0.328px;">$42.10B</div><div class="a" style="left:132.2px;top:798.9px;width:11.0px;height:84.10000000000002px;background:linear-gradient(180deg,#4a82ee,#67a5f8);border-radius:3px 3px 0 0;"></div><div class="a" style="left:146.2px;top:807.3px;width:11.0px;height:75.70000000000005px;background:linear-gradient(180deg,#8b5cf0,#ae8af6);border-radius:3px 3px 0 0;"></div><div class="t" style="left:131.01px;top:891.19px;font-size:11px;line-height:11px;color:#6aa2f7;font-weight:700;letter-spacing:-0.513px;">89.6B</div><div class="t" style="left:131.01px;top:904.09px;font-size:11px;line-height:11px;color:#ad8cf7;font-weight:700;letter-spacing:-0.513px;">23.6B</div><div class="t" style="left:128.31px;top:920.51px;font-size:10.5px;line-height:10.5px;color:#9a98a8;">Mar 21</div><div class="a" style="left:221.2px;top:806.6px;width:11.0px;height:76.39999999999998px;background:linear-gradient(180deg,#4a82ee,#67a5f8);border-radius:3px 3px 0 0;"></div><div class="a" style="left:235.2px;top:813.4px;width:11.0px;height:69.60000000000002px;background:linear-gradient(180deg,#8b5cf0,#ae8af6);border-radius:3px 3px 0 0;"></div><div class="t" style="left:220.09px;top:891.19px;font-size:11px;line-height:11px;color:#6aa2f7;font-weight:700;letter-spacing:-0.513px;">81.4B</div><div class="t" style="left:220.09px;top:904.09px;font-size:11px;line-height:11px;color:#ad8cf7;font-weight:700;letter-spacing:-0.513px;">21.7B</div><div class="t" style="left:217.97px;top:920.51px;font-size:10.5px;line-height:10.5px;color:#9a98a8;">Jun 21</div><div class="a" style="left:310.3px;top:804.7px;width:11.0px;height:78.29999999999995px;background:linear-gradient(180deg,#4a82ee,#67a5f8);border-radius:3px 3px 0 0;"></div><div class="a" style="left:324.3px;top:816.9px;width:11.0px;height:66.10000000000002px;background:linear-gradient(180deg,#8b5cf0,#ae8af6);border-radius:3px 3px 0 0;"></div><div class="t" style="left:309.17px;top:891.19px;font-size:11px;line-height:11px;color:#6aa2f7;font-weight:700;letter-spacing:-0.513px;">83.4B</div><div class="t" style="left:309.17px;top:904.09px;font-size:11px;line-height:11px;color:#ad8cf7;font-weight:700;letter-spacing:-0.513px;">20.6B</div><div class="t" style="left:306.17px;top:920.51px;font-size:10.5px;line-height:10.5px;color:#9a98a8;">Sep 21</div><div class="a" style="left:399.4px;top:766.7px;width:11.0px;height:116.29999999999995px;background:linear-gradient(180deg,#4a82ee,#67a5f8);border-radius:3px 3px 0 0;"></div><div class="a" style="left:413.4px;top:772.0px;width:11.0px;height:111.0px;background:linear-gradient(180deg,#8b5cf0,#ae8af6);border-radius:3px 3px 0 0;"></div><div class="t" style="left:395.39px;top:891.19px;font-size:11px;line-height:11px;color:#6aa2f7;font-weight:700;letter-spacing:-0.497px;">123.9B</div><div class="t" style="left:398.25px;top:904.09px;font-size:11px;line-height:11px;color:#ad8cf7;font-weight:700;letter-spacing:-0.513px;">34.6B</div><div class="t" style="left:395.26px;top:920.51px;font-size:10.5px;line-height:10.5px;color:#9a98a8;">Dec 21</div><div class="a" style="left:488.5px;top:791.7px;width:11.0px;height:91.29999999999995px;background:linear-gradient(180deg,#4a82ee,#67a5f8);border-radius:3px 3px 0 0;"></div><div class="a" style="left:502.5px;top:802.8px;width:11.0px;height:80.20000000000005px;background:linear-gradient(180deg,#8b5cf0,#ae8af6);border-radius:3px 3px 0 0;"></div><div class="t" style="left:487.33px;top:891.19px;font-size:11px;line-height:11px;color:#6aa2f7;font-weight:700;letter-spacing:-0.513px;">97.3B</div><div class="t" style="left:487.33px;top:904.09px;font-size:11px;line-height:11px;color:#ad8cf7;font-weight:700;letter-spacing:-0.513px;">25.0B</div><div class="t" style="left:484.63px;top:920.51px;font-size:10.5px;line-height:10.5px;color:#9a98a8;">Mar 22</div><div class="a" style="left:577.5px;top:805.1px;width:11.0px;height:77.89999999999998px;background:linear-gradient(180deg,#4a82ee,#67a5f8);border-radius:3px 3px 0 0;"></div><div class="a" style="left:591.5px;top:820.8px;width:11.0px;height:62.200000000000045px;background:linear-gradient(180deg,#8b5cf0,#ae8af6);border-radius:3px 3px 0 0;"></div><div class="t" style="left:576.41px;top:891.19px;font-size:11px;line-height:11px;color:#6aa2f7;font-weight:700;letter-spacing:-0.513px;">83.0B</div><div class="t" style="left:576.41px;top:904.09px;font-size:11px;line-height:11px;color:#ad8cf7;font-weight:700;letter-spacing:-0.513px;">19.4B</div><div class="t" style="left:574.29px;top:920.51px;font-size:10.5px;line-height:10.5px;color:#9a98a8;">Jun 22</div><div class="a" style="left:666.6px;top:798.4px;width:11.0px;height:84.60000000000002px;background:linear-gradient(180deg,#4a82ee,#67a5f8);border-radius:3px 3px 0 0;"></div><div class="a" style="left:680.6px;top:816.6px;width:11.0px;height:66.39999999999998px;background:linear-gradient(180deg,#8b5cf0,#ae8af6);border-radius:3px 3px 0 0;"></div><div class="t" style="left:665.49px;top:891.19px;font-size:11px;line-height:11px;color:#6aa2f7;font-weight:700;letter-spacing:-0.513px;">90.1B</div><div class="t" style="left:665.49px;top:904.09px;font-size:11px;line-height:11px;color:#ad8cf7;font-weight:700;letter-spacing:-0.513px;">20.7B</div><div class="t" style="left:662.49px;top:920.51px;font-size:10.5px;line-height:10.5px;color:#9a98a8;">Sep 22</div><div class="a" style="left:755.7px;top:773.0px;width:11.0px;height:110.0px;background:linear-gradient(180deg,#4a82ee,#67a5f8);border-radius:3px 3px 0 0;"></div><div class="a" style="left:769.7px;top:786.8px;width:11.0px;height:96.20000000000005px;background:linear-gradient(180deg,#8b5cf0,#ae8af6);border-radius:3px 3px 0 0;"></div><div class="t" style="left:752.00px;top:891.19px;font-size:11px;line-height:11px;color:#6aa2f7;font-weight:700;letter-spacing:-0.488px;">117.2B</div><div class="t" style="left:754.57px;top:904.09px;font-size:11px;line-height:11px;color:#ad8cf7;font-weight:700;letter-spacing:-0.513px;">30.0B</div><div class="t" style="left:751.58px;top:920.51px;font-size:10.5px;line-height:10.5px;color:#9a98a8;">Dec 22</div><div class="a" style="left:844.8px;top:794.0px;width:11.0px;height:89.0px;background:linear-gradient(180deg,#4a82ee,#67a5f8);border-radius:3px 3px 0 0;"></div><div class="a" style="left:858.8px;top:805.4px;width:11.0px;height:77.60000000000002px;background:linear-gradient(180deg,#8b5cf0,#ae8af6);border-radius:3px 3px 0 0;"></div><div class="t" style="left:843.65px;top:891.19px;font-size:11px;line-height:11px;color:#6aa2f7;font-weight:700;letter-spacing:-0.513px;">94.8B</div><div class="t" style="left:843.65px;top:904.09px;font-size:11px;line-height:11px;color:#ad8cf7;font-weight:700;letter-spacing:-0.513px;">24.2B</div><div class="t" style="left:841.82px;top:920.51px;font-size:10.5px;line-height:10.5px;color:#9a98a8;">Apr 23</div><div class="a" style="left:933.9px;top:806.2px;width:11.0px;height:76.79999999999995px;background:linear-gradient(180deg,#4a82ee,#67a5f8);border-radius:3px 3px 0 0;"></div><div class="a" style="left:947.9px;top:819.2px;width:11.0px;height:63.799999999999955px;background:linear-gradient(180deg,#8b5cf0,#ae8af6);border-radius:3px 3px 0 0;"></div><div class="t" style="left:932.73px;top:891.19px;font-size:11px;line-height:11px;color:#6aa2f7;font-weight:700;letter-spacing:-0.513px;">81.8B</div><div class="t" style="left:932.73px;top:904.09px;font-size:11px;line-height:11px;color:#ad8cf7;font-weight:700;letter-spacing:-0.513px;">19.9B</div><div class="t" style="left:932.37px;top:920.51px;font-size:10.5px;line-height:10.5px;color:#9a98a8;">Jul 23</div><div class="a" style="left:1023.0px;top:799.0px;width:11.0px;height:84.0px;background:linear-gradient(180deg,#4a82ee,#67a5f8);border-radius:3px 3px 0 0;"></div><div class="a" style="left:1037.0px;top:809.2px;width:11.0px;height:73.79999999999995px;background:linear-gradient(180deg,#8b5cf0,#ae8af6);border-radius:3px 3px 0 0;"></div><div class="t" style="left:1021.81px;top:891.19px;font-size:11px;line-height:11px;color:#6aa2f7;font-weight:700;letter-spacing:-0.513px;">89.5B</div><div class="t" style="left:1021.81px;top:904.09px;font-size:11px;line-height:11px;color:#ad8cf7;font-weight:700;letter-spacing:-0.513px;">23.0B</div><div class="t" style="left:1018.81px;top:920.51px;font-size:10.5px;line-height:10.5px;color:#9a98a8;">Sep 23</div><div class="a" style="left:1112.0px;top:770.7px;width:11.0px;height:112.29999999999995px;background:linear-gradient(180deg,#4a82ee,#67a5f8);border-radius:3px 3px 0 0;"></div><div class="a" style="left:1126.0px;top:774.3px;width:11.0px;height:108.70000000000005px;background:linear-gradient(180deg,#8b5cf0,#ae8af6);border-radius:3px 3px 0 0;"></div><div class="t" style="left:1108.32px;top:891.19px;font-size:11px;line-height:11px;color:#6aa2f7;font-weight:700;letter-spacing:-0.488px;">119.6B</div><div class="t" style="left:1110.89px;top:904.09px;font-size:11px;line-height:11px;color:#ad8cf7;font-weight:700;letter-spacing:-0.513px;">33.9B</div><div class="t" style="left:1107.90px;top:920.51px;font-size:10.5px;line-height:10.5px;color:#9a98a8;">Dec 23</div><div class="a" style="left:1201.1px;top:797.8px;width:11.0px;height:85.20000000000005px;background:linear-gradient(180deg,#4a82ee,#67a5f8);border-radius:3px 3px 0 0;"></div><div class="a" style="left:1215.1px;top:807.3px;width:11.0px;height:75.70000000000005px;background:linear-gradient(180deg,#8b5cf0,#ae8af6);border-radius:3px 3px 0 0;"></div><div class="t" style="left:1199.97px;top:891.19px;font-size:11px;line-height:11px;color:#6aa2f7;font-weight:700;letter-spacing:-0.513px;">90.8B</div><div class="t" style="left:1199.97px;top:904.09px;font-size:11px;line-height:11px;color:#ad8cf7;font-weight:700;letter-spacing:-0.513px;">23.6B</div><div class="t" style="left:1197.27px;top:920.51px;font-size:10.5px;line-height:10.5px;color:#9a98a8;">Mar 24</div><div class="a" style="left:1290.2px;top:802.5px;width:11.0px;height:80.5px;background:linear-gradient(180deg,#4a82ee,#67a5f8);border-radius:3px 3px 0 0;"></div><div class="a" style="left:1304.2px;top:814.4px;width:11.0px;height:68.60000000000002px;background:linear-gradient(180deg,#8b5cf0,#ae8af6);border-radius:3px 3px 0 0;"></div><div class="t" style="left:1289.05px;top:891.19px;font-size:11px;line-height:11px;color:#6aa2f7;font-weight:700;letter-spacing:-0.513px;">85.8B</div><div class="t" style="left:1289.05px;top:904.09px;font-size:11px;line-height:11px;color:#ad8cf7;font-weight:700;letter-spacing:-0.513px;">21.4B</div><div class="t" style="left:1286.93px;top:920.51px;font-size:10.5px;line-height:10.5px;color:#9a98a8;">Jun 24</div><div class="a" style="left:1379.3px;top:793.9px;width:11.0px;height:89.10000000000002px;background:linear-gradient(180deg,#4a82ee,#67a5f8);border-radius:3px 3px 0 0;"></div><div class="a" style="left:1393.3px;top:835.9px;width:11.0px;height:47.10000000000002px;background:linear-gradient(180deg,#8b5cf0,#ae8af6);border-radius:3px 3px 0 0;"></div><div class="t" style="left:1378.13px;top:891.19px;font-size:11px;line-height:11px;color:#6aa2f7;font-weight:700;letter-spacing:-0.513px;">94.9B</div><div class="t" style="left:1378.13px;top:904.09px;font-size:11px;line-height:11px;color:#ad8cf7;font-weight:700;letter-spacing:-0.513px;">14.7B</div><div class="t" style="left:1375.13px;top:920.51px;font-size:10.5px;line-height:10.5px;color:#9a98a8;">Sep 24</div><div class="a" style="left:1468.4px;top:766.3px;width:11.0px;height:116.70000000000005px;background:linear-gradient(180deg,#4a82ee,#67a5f8);border-radius:3px 3px 0 0;"></div><div class="a" style="left:1482.4px;top:766.6px;width:11.0px;height:116.39999999999998px;background:linear-gradient(180deg,#8b5cf0,#ae8af6);border-radius:3px 3px 0 0;"></div><div class="t" style="left:1464.35px;top:891.19px;font-size:11px;line-height:11px;color:#6aa2f7;font-weight:700;letter-spacing:-0.497px;">124.3B</div><div class="t" style="left:1467.21px;top:904.09px;font-size:11px;line-height:11px;color:#ad8cf7;font-weight:700;letter-spacing:-0.513px;">36.3B</div><div class="t" style="left:1464.22px;top:920.51px;font-size:10.5px;line-height:10.5px;color:#9a98a8;">Dec 24</div><div class="a" style="left:1557.4px;top:793.4px;width:11.0px;height:89.60000000000002px;background:linear-gradient(180deg,#4a82ee,#67a5f8);border-radius:3px 3px 0 0;"></div><div class="a" style="left:1571.4px;top:803.5px;width:11.0px;height:79.5px;background:linear-gradient(180deg,#8b5cf0,#ae8af6);border-radius:3px 3px 0 0;"></div><div class="t" style="left:1556.29px;top:891.19px;font-size:11px;line-height:11px;color:#6aa2f7;font-weight:700;letter-spacing:-0.513px;">95.4B</div><div class="t" style="left:1556.29px;top:904.09px;font-size:11px;line-height:11px;color:#ad8cf7;font-weight:700;letter-spacing:-0.513px;">24.8B</div><div class="t" style="left:1553.59px;top:920.51px;font-size:10.5px;line-height:10.5px;color:#9a98a8;">Mar 25</div><div class="a" style="left:1646.5px;top:794.8px;width:11.0px;height:88.20000000000005px;background:linear-gradient(180deg,#4a82ee,#67a5f8);border-radius:3px 3px 0 0;"></div><div class="a" style="left:1660.5px;top:808.0px;width:11.0px;height:75.0px;background:linear-gradient(180deg,#8b5cf0,#ae8af6);border-radius:3px 3px 0 0;"></div><div class="t" style="left:1645.37px;top:891.19px;font-size:11px;line-height:11px;color:#6aa2f7;font-weight:700;letter-spacing:-0.513px;">94.0B</div><div class="t" style="left:1645.37px;top:904.09px;font-size:11px;line-height:11px;color:#ad8cf7;font-weight:700;letter-spacing:-0.513px;">23.4B</div><div class="t" style="left:1643.25px;top:920.51px;font-size:10.5px;line-height:10.5px;color:#9a98a8;">Jun 25</div><div class="a" style="left:1735.6px;top:786.8px;width:11.0px;height:96.20000000000005px;background:linear-gradient(180deg,#4a82ee,#67a5f8);border-radius:3px 3px 0 0;"></div><div class="a" style="left:1749.6px;top:794.8px;width:11.0px;height:88.20000000000005px;background:linear-gradient(180deg,#8b5cf0,#ae8af6);border-radius:3px 3px 0 0;"></div><div class="t" style="left:1731.59px;top:891.19px;font-size:11px;line-height:11px;color:#6aa2f7;font-weight:700;letter-spacing:-0.497px;">102.5B</div><div class="t" style="left:1734.45px;top:904.09px;font-size:11px;line-height:11px;color:#ad8cf7;font-weight:700;letter-spacing:-0.513px;">27.5B</div><div class="t" style="left:1731.45px;top:920.51px;font-size:10.5px;line-height:10.5px;color:#9a98a8;">Sep 25</div><div class="a" style="left:1824.7px;top:748.0px;width:11.0px;height:135.0px;background:linear-gradient(180deg,#4a82ee,#67a5f8);border-radius:3px 3px 0 0;"></div><div class="a" style="left:1838.7px;top:748.0px;width:11.0px;height:135.0px;background:linear-gradient(180deg,#8b5cf0,#ae8af6);border-radius:3px 3px 0 0;"></div><div class="t" style="left:1820.67px;top:891.19px;font-size:11px;line-height:11px;color:#6aa2f7;font-weight:700;letter-spacing:-0.497px;">143.8B</div><div class="t" style="left:1823.53px;top:904.09px;font-size:11px;line-height:11px;color:#ad8cf7;font-weight:700;letter-spacing:-0.513px;">42.1B</div><div class="t" style="left:1820.54px;top:920.51px;font-size:10.5px;line-height:10.5px;color:#9a98a8;">Dec 25</div><div class="a" style="left:72px;top:615px;width:1838px;height:325px;border:4px solid #fcbf00;box-shadow:0 0 0 1px rgba(18,20,52,0.75), 0 2px 3px rgba(0,0,0,0.55), inset 0 0 0 1px rgba(2,2,12,0.9), inset 0 1px 3px 1px rgba(0,0,0,0.45);"></div><svg style="left:676px;top:515px" width="30" height="100" viewBox="0 0 30 100"><defs><filter id="sh" x="-50%" y="-20%" width="200%" height="140%"><feDropShadow dx="1" dy="1" stdDeviation="1.2" flood-color="#000" flood-opacity="0.6"/></filter></defs><g filter="url(#sh)"><path d="M10.2,8 A4.9,4.9 0 0 1 20,8 L19,80 L26,80 L16,96 L6,80 L11.5,80 Z" fill="#fcbf00"/></g></svg>
</body></html>
